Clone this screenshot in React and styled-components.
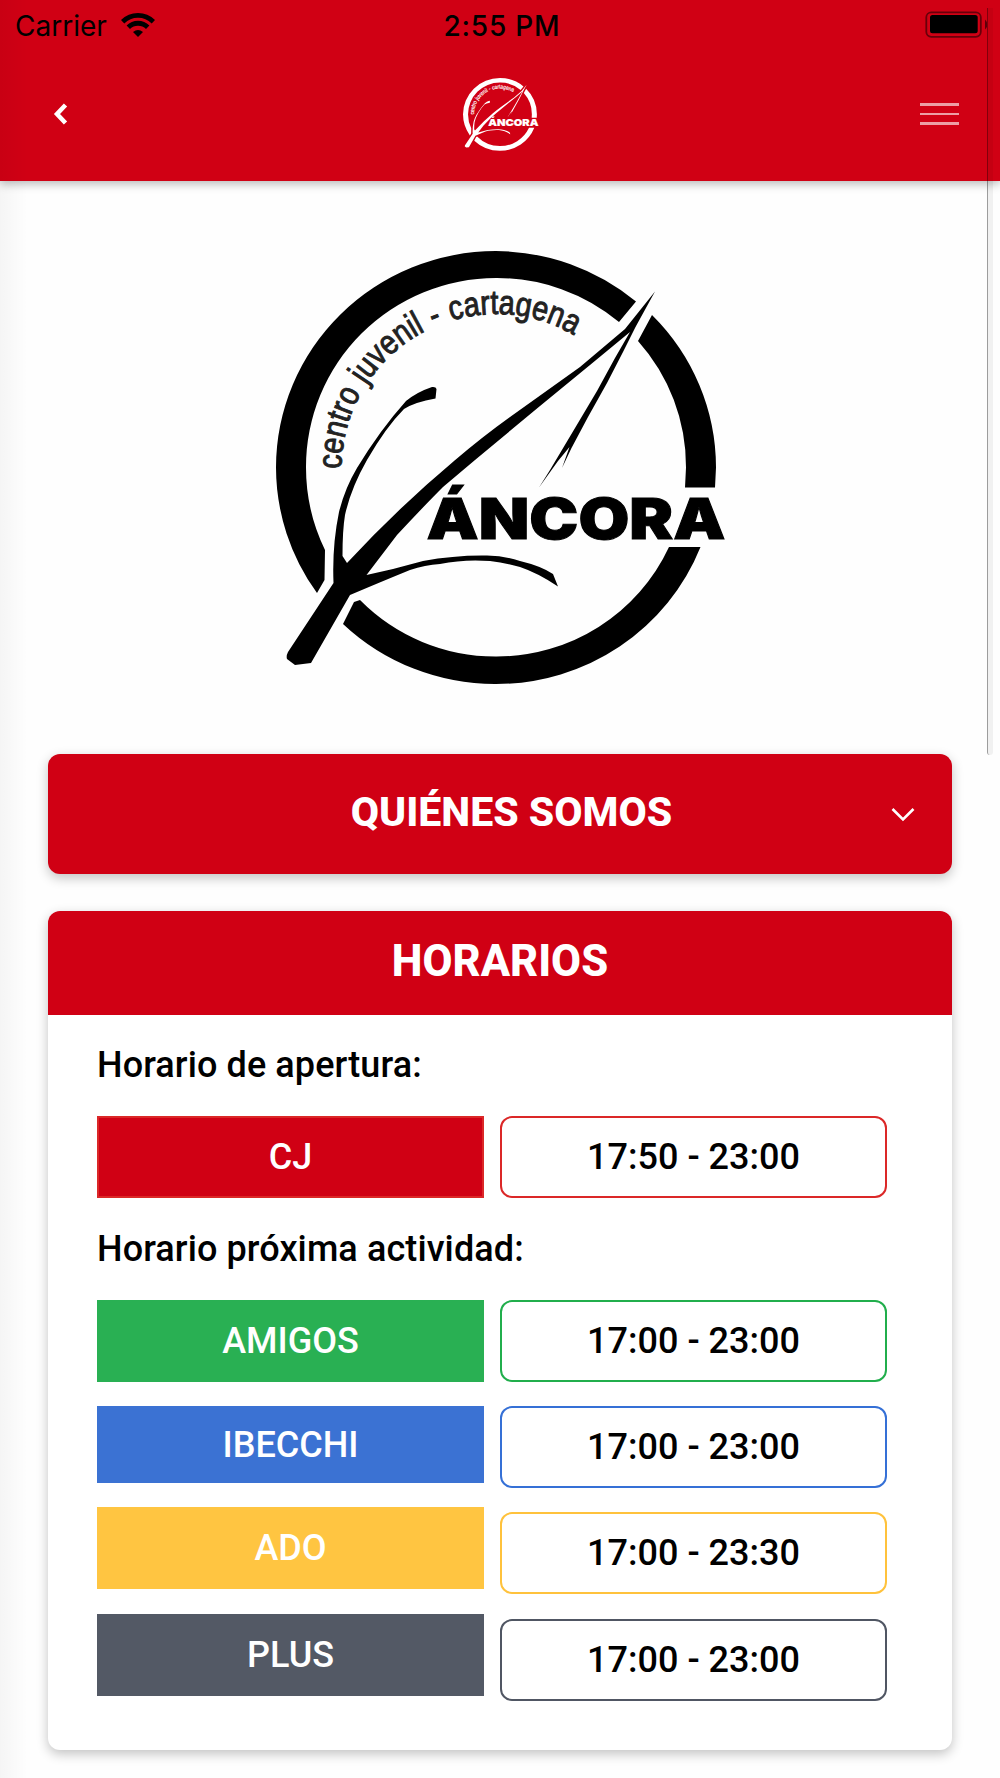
import React, { useId } from "react";
import styled, { createGlobalStyle } from "styled-components";

const openingHours = { name: "CJ", hours: "17:50 - 23:00", color: "#d00014", border: "#db2828" };

const activities = [
  { name: "AMIGOS", hours: "17:00 - 23:00", color: "#29b053", border: "#21ae4c" },
  { name: "IBECCHI", hours: "17:00 - 23:00", color: "#3b72d3", border: "#3570d6", height: 77 },
  { name: "ADO", hours: "17:00 - 23:30", color: "#ffc541", border: "#ffc23c" },
  { name: "PLUS", hours: "17:00 - 23:00", color: "#535965", border: "#505663" },
];

function AncoraLogo({ width, color, textColor }) {
  const arcId = useId();

  return (
    <Logo viewBox="276 251 450 434" $width={width} fill={color}>
      {/* ring */}
      <path d="M317 593A220 216.5 0 0 1 276 467.5A220 216.5 0 0 1 496 251A220 216.5 0 0 1 636 301.5L619 322A190 189 0 0 0 496 278A190 189 0 0 0 306 467.5A190 189 0 0 0 325 550L324.500 580Z" />
      <path d="M652 315A220 216.5 0 0 1 716 467.5L715 487.500H685L686 467.5A190 189 0 0 0 638 341Z" />
      <path d="M700.500 547A220 216.5 0 0 1 496 684A220 216.5 0 0 1 343 624L354 602L360 600A190 189 0 0 0 496 656.5A190 189 0 0 0 669 547Z" />
      {/* anchor */}
      <path d="M333.500 583Q332 546 339 512Q345 488 357 468Q380 430 406 401Q417 392 432 387Q436 386.500 436.500 389L435.500 398.500Q415 402 404 409Q386 427 367 460Q351 488 345 515Q342.500 530 342.500 556L347 563Q398 508 454 461Q482 437 510 417L580 367L625 329L655 291.500L635.500 327L623 352L607 383L588 417L571.500 448L562 468L569.500 447L558 461L539 487.500L550 470L578 423L597 391L615 358L630 332L590 365L540 406L475 460L443 487Q424 506 397 535L366.500 575Q395 569 423 561Q455 555 487 555.500Q506 556 520 561Q541 566 553 574L558 586.500Q538 573 520 567Q506 563 490 561Q464 559 440 564Q425 565 410 570Q383 581 350 595L311 663L295 665L287 659Q286 656 288 652Z" />
      <path id={arcId} d="M341.500 469A154.500 154.500 0 0 1 496 314A154.500 154.500 0 0 1 650.500 468" fill="none" />
      <ArcText fill={textColor} stroke={textColor} strokeWidth="1">
        <textPath href={`#${arcId}`} textLength="325" lengthAdjust="spacingAndGlyphs">
          centro juvenil - cartagena
        </textPath>
      </ArcText>
      <LogoName x="426.500" y="539" textLength="299" lengthAdjust="spacingAndGlyphs" stroke={color}>
        ÁNCORA
      </LogoName>
    </Logo>
  );
}

function App() {
  return (
    <Screen>
      <GlobalStyle />
      <Header>
        <StatusBar>
          <Carrier>
            Carrier
            <svg width="34" height="26" viewBox="121 11 34 26">
              <path
                d="M122.600 20.700A21.700 21.700 0 0 1 153.400 20.700M128.300 26.300A13.700 13.700 0 0 1 147.700 26.300"
                fill="none"
                stroke="#000"
                strokeWidth="4.8"
              />
              <path d="M138 36L133 31Q138 27 143 31Z" />
            </svg>
          </Carrier>
          <Clock>2:55 PM</Clock>
          <svg width="62" height="28" viewBox="925 11 62 28">
            <rect x="926.300" y="12.300" width="54.500" height="24.500" rx="5" fill="none" stroke="#000" strokeOpacity="0.5" strokeWidth="1.800" />
            <rect x="930" y="15" width="47.700" height="18.300" rx="2.500" />
            <path d="M985 19.500Q990 24.500 985 29.500Z" fillOpacity="0.55" />
          </svg>
        </StatusBar>
        <NavBar>
          <BackButton aria-label="Volver">
            <svg width="16" height="24" viewBox="0 0 16 24">
              <path d="M12.500 3L4 12L12.500 21" fill="none" stroke="#fff" strokeWidth="4.500" />
            </svg>
          </BackButton>
          <AncoraLogo width={75.6} color="#fff" textColor="#fff" />
          <MenuButton aria-label="Menú">
            <MenuLine />
            <MenuLine />
            <MenuLine />
          </MenuButton>
        </NavBar>
      </Header>

      <Content>
        <Hero>
          <AncoraLogo width={450} color="#000" textColor="#222" />
        </Hero>

        <AboutCard>
          <AboutTitle>QUIÉNES SOMOS</AboutTitle>
          <svg width="24" height="16" viewBox="0 0 24 16">
            <path d="M1.500 3L12 13.500L22.500 3" fill="none" stroke="#fff" strokeWidth="2.600" />
          </svg>
        </AboutCard>

        <Card>
          <CardTitle>HORARIOS</CardTitle>
          <CardBody>
            <Label>Horario de apertura:</Label>
            <Columns>
              <Tag $color={openingHours.color} $border={openingHours.border}>
                {openingHours.name}
              </Tag>
              <Hours $border={openingHours.border}>{openingHours.hours}</Hours>
            </Columns>
            <Label>Horario próxima actividad:</Label>
            <Columns>
              <Column>
                {activities.map(({ name, color, height }) => (
                  <Tag key={name} $color={color} $border={color} $height={height}>
                    {name}
                  </Tag>
                ))}
              </Column>
              <Column>
                {activities.map(({ name, hours, border }) => (
                  <Hours key={name} $border={border}>
                    {hours}
                  </Hours>
                ))}
              </Column>
            </Columns>
          </CardBody>
        </Card>
      </Content>

      <EdgeShade />
      <ScrollThumb />
    </Screen>
  );
}

const GlobalStyle = createGlobalStyle`
  * {
    box-sizing: border-box;
  }

  body {
    margin: 0;
    background: #fefefe;
    font-family: Roboto, "Liberation Sans", sans-serif;
  }

  svg {
    display: block;
  }
`;

const Screen = styled.div`
  position: relative;
  width: 1000px;
  height: 1778px;
  overflow: hidden;
`;

const Header = styled.header`
  height: 181px;
  background: #d00014;
  box-shadow: 0 3px 9px rgba(0, 0, 0, 0.28);
`;

const StatusBar = styled.div`
  display: grid;
  grid-template-columns: 1fr auto 1fr;
  align-items: center;
  height: 51px;
  padding: 0 13px 0 15px;
  font-family: Inter, "Liberation Sans", sans-serif;
  font-size: 28px;
  color: #000;

  > svg {
    justify-self: end;
    margin-top: -1px;
  }
`;

const Carrier = styled.div`
  display: flex;
  align-items: center;
  gap: 14px;

  svg {
    margin-top: -2px;
  }
`;

const Clock = styled.div`
  padding-left: 2px;
  font-weight: 550;
  letter-spacing: 0.8px;
`;

const NavBar = styled.nav`
  display: grid;
  grid-template-columns: 1fr auto 1fr;
  align-items: center;
  height: 127px;
  padding: 0 41px 0 42px;
`;

const IconButton = styled.button`
  padding: 0;
  border: none;
  background: none;
`;

const BackButton = styled(IconButton)`
  justify-self: start;
  margin: 0 0 2px 11px;
`;

const MenuButton = styled(IconButton)`
  display: flex;
  flex-direction: column;
  justify-self: end;
  gap: 7px;
  width: 39px;
  margin-bottom: 1px;
`;

const MenuLine = styled.span`
  height: 2.5px;
  background: rgba(255, 255, 255, 0.62);
`;

const Logo = styled.svg`
  width: ${({ $width }) => $width}px;
  aspect-ratio: 450 / 434;
  overflow: visible;
`;

const ArcText = styled.text`
  font-family: "Liberation Sans", Arial, sans-serif;
  font-size: 34px;
  word-spacing: 1.5px;
`;

const LogoName = styled.text`
  font-family: Inter, sans-serif;
  font-size: 57px;
  font-weight: 900;
  stroke-width: 1px;
`;

const Content = styled.main`
  padding: 70px 48px 0;
`;

const Hero = styled.div`
  height: 503px;
  padding-left: 228px;
`;

const Card = styled.section`
  height: 839px;
  border-radius: 12px;
  background: #fff;
  box-shadow: 0 4px 12px rgba(0, 0, 0, 0.24);
  overflow: hidden;
`;

const AboutCard = styled(Card)`
  display: flex;
  align-items: center;
  height: 120px;
  margin-bottom: 37px;
  padding: 0 37px 0 84px;
  background: #d00014;
`;

const AboutTitle = styled.h2`
  flex: 1;
  margin: -4px 0 0;
  font-size: 41px;
  font-weight: 800;
  color: #fff;
  text-align: center;
`;

const CardTitle = styled.h2`
  height: 104px;
  margin: 0;
  background: #d00014;
  font-size: 43.5px;
  font-weight: 800;
  line-height: 101px;
  color: #fff;
  text-align: center;
`;

const CardBody = styled.div`
  padding: 29px 65px 0 49px;
`;

const Label = styled.p`
  margin: 0;
  font-size: 36px;
  font-weight: 500;
  line-height: 42px;
  letter-spacing: 0.1px;
  color: #000;
`;

const Columns = styled.div`
  display: grid;
  grid-template-columns: 1fr 1fr;
  gap: 16px;
  margin: 30px 0;
`;

const Column = styled.div`
  display: flex;
  flex-direction: column;
  gap: 24.2px;
`;

const Tag = styled.div`
  display: flex;
  justify-content: center;
  align-items: center;
  height: ${({ $height }) => $height || 82}px;
  border: 2px solid ${({ $border }) => $border};
  background: ${({ $color }) => $color};
  font-size: 36px;
  font-weight: 500;
  color: #fff;
`;

const Hours = styled(Tag)`
  border-radius: 12px;
  background: #fff;
  color: #000;
`;

const EdgeShade = styled.div`
  position: absolute;
  top: 0;
  left: 0;
  width: 28px;
  height: 100%;
  background: linear-gradient(to right, rgba(0, 0, 0, 0.035), transparent);
`;

const ScrollThumb = styled.div`
  position: absolute;
  top: 8px;
  right: 7px;
  width: 6px;
  height: 747px;
  border-left: 1px solid rgba(0, 0, 0, 0.35);
  border-radius: 0 0 3px 3px;
  background: rgba(0, 0, 0, 0.05);
`;

export default App;
